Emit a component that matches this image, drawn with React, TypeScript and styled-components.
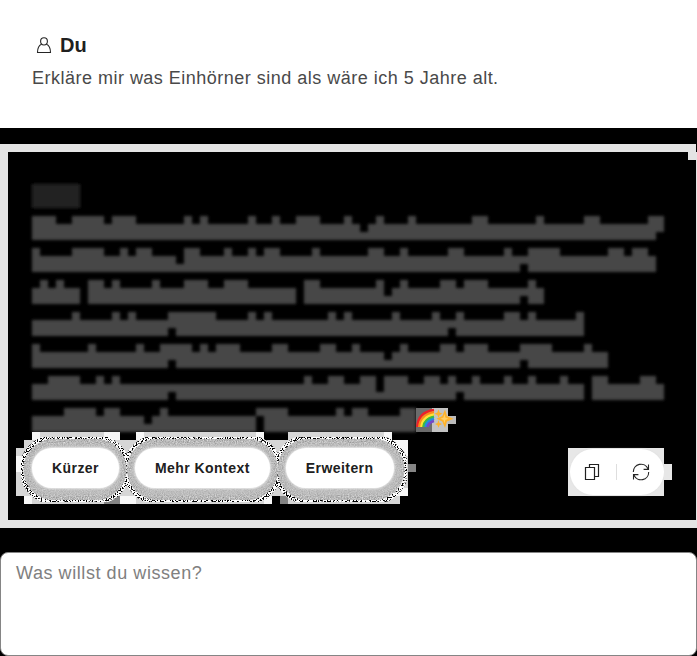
import React from "react";
import styled, { createGlobalStyle } from "styled-components";

const GlobalStyle = createGlobalStyle`
  * { box-sizing: border-box; }
  html, body { margin: 0; padding: 0; background: #000; overflow: hidden; }
  body, button, textarea { font-family: "Liberation Sans", Arial, Helvetica, sans-serif; }
`;

const Page = styled.main`
  width: 697px;
  height: 656px;
  display: flex;
  flex-direction: column;
  background: #000;
  overflow: hidden;
`;

const Prompt = styled.section`
  height: 128px;
  flex: none;
  padding: 32px 32px 0;
  background: #fff;
`;

const Author = styled.h2`
  margin: 0;
  height: 26px;
  display: flex;
  align-items: center;
  gap: 8px;
  padding-left: 4px;
  font-size: 20px;
  font-weight: 700;
  line-height: 26px;
  color: #202020;
  svg { display: block; }
`;

const Question = styled.p`
  margin: 8px 0 0;
  font-size: 18px;
  line-height: 24px;
  letter-spacing: 0.49px;
  color: #494949;
  white-space: nowrap;
`;

const Answer = styled.section`
  position: relative;
  height: 384px;
  flex: none;
  margin-top: 16px;
  padding: 32px 0 0 24px;
  border: solid #e4e4e4;
  border-width: 8px 1px 8px 8px;
`;

const Corner = styled.span`
  position: absolute;
  top: 0;
  right: 0;
  width: 8px;
  height: 8px;
  background: #e4e4e4;
`;

const Outside = styled.span`
  position: absolute;
  top: -8px;
  right: -1px;
  width: 1px;
  height: 8px;
  background: #000;
`;

const HiddenText = styled.svg`
  display: block;
  overflow: visible;
`;

const Footer = styled.div`
  position: relative;
  height: 48px;
  margin-top: 16px;
  display: flex;
  justify-content: space-between;
`;

const Halo = styled.svg`
  position: absolute;
  left: -24px;
  top: -17px;
  pointer-events: none;
`;

const Suggestions = styled.div`
  position: relative;
  display: flex;
  gap: 16px;
  height: 40px;
`;

const Pill = styled.button`
  height: 40px;
  padding: 0 20px;
  border: 0;
  border-radius: 20px;
  background: #fff;
  box-shadow: 0 0 2px 1px #e8e8e8;
  color: #202020;
  font-size: 14px;
  font-weight: 700;
  line-height: 39px;
  letter-spacing: 0.44px;
  white-space: nowrap;
`;

const ToolPatch = styled.div`
  position: relative;
  width: 96px;
  height: 48px;
  margin-right: 32px;
  background: #e7e7e7;
`;

const PatchTail = styled.span`
  position: absolute;
  left: 96px;
  top: 16px;
  width: 8px;
  height: 16px;
  background: #e7e7e7;
`;

const Tools = styled.div`
  width: 94px;
  height: 46px;
  margin: 1px 0 0 1.5px;
  display: flex;
  align-items: center;
  justify-content: center;
  border-radius: 23px;
  background: #fff;
  box-shadow: 0 0 2px #ddd;
`;

const Tool = styled.button`
  display: flex;
  width: 48px;
  height: 40px;
  flex: none;
  padding: 0;
  align-items: center;
  justify-content: center;
  border: 0;
  background: none;
`;

const Divider = styled.span`
  width: 1px;
  height: 16px;
  flex: none;
  background: #dedede;
`;

const Ask = styled.textarea`
  display: block;
  width: 697px;
  height: 104px;
  flex: none;
  margin: 24px 0 0;
  padding: 8px 15px;
  resize: none;
  border: 1px solid #858585;
  border-radius: 8px;
  background: #fff;
  font-size: 18px;
  line-height: 25px;
  letter-spacing: 0.57px;
  outline: none;
  &::placeholder { color: #808080; opacity: 1; }
`;

type Line = { end: number; up: number[]; dip?: number[]; notch?: number[]; gap?: number[]; cap?: number[] };

const CELL = 8;

/* Each line is a run of 8px cells: `up` cells rise one step, `dip` cells lose
   their middle, `notch` cells lose their foot, `cap` cells keep only the top. */
const lines: Line[] = [
  { end: 79, up: [0, 1, 2, 5, 6, 7, 8, 10, 11, 12, 19, 21, 27, 30, 33, 34, 35, 39, 43, 47, 55, 56, 63, 69, 70, 77, 78], dip: [41], notch: [78] },
  { end: 78, up: [0, 5, 6, 7, 8, 11, 13, 14, 19, 20, 24, 27, 29, 30, 35, 42, 43, 46, 52, 53, 59, 62, 63, 64, 65, 72, 73, 75, 76], dip: [18], notch: [61] },
  { end: 64, up: [1, 3, 7, 8, 10, 15, 19, 20, 21, 24, 25, 26, 34, 35, 43, 46, 51, 52, 54, 55, 56, 62], dip: [44], notch: [61], gap: [6, 33] },
  { end: 69, up: [5, 10, 12, 17, 18, 19, 20, 21, 22, 27, 29, 37, 39, 45, 50, 53, 59, 60, 62, 68], notch: [17, 52] },
  { end: 72, up: [0, 7, 13, 16, 17, 18, 19, 21, 23, 24, 25, 30, 31, 36, 37, 40, 46, 51, 52, 54, 55, 56, 61, 62, 63, 64, 69], dip: [44], notch: [17, 61] },
  { end: 79, up: [2, 3, 4, 5, 8, 10, 34, 37, 38, 41, 42, 44, 45, 46, 49, 50, 52, 55, 59, 62, 66, 70, 71, 76, 77], dip: [43], notch: [17, 53], gap: [69] },
  { end: 48, up: [4, 5, 6, 7, 9, 10, 16, 28, 29, 30, 31, 38, 40, 41, 46, 47], dip: [14], cap: [28] },
];

function linePath({ end, up, dip = [], notch = [], gap = [], cap = [] }: Line, y: number) {
  let d = "";
  for (let i = 0; i < end; i++) {
    if (gap.includes(i)) continue;
    const top = up.includes(i) ? 0 : dip.includes(i) ? 16 : 8;
    const bottom = cap.includes(i) ? 8 : notch.includes(i) ? 16 : 24;
    d += `M${i * CELL} ${y + top}h8v${bottom - top}h-8z`;
  }
  return d;
}

const UserIcon = () => (
  <svg width="16" height="18" viewBox="0 0 16 18" fill="none" stroke="#252525" strokeWidth="1.1">
    <path d="M8 1.7c2.1 0 3.4 1.5 3.4 3.6S10 9 8 9 4.6 7.4 4.6 5.3 5.9 1.7 8 1.7Z" />
    <path d="M5.5 8.2C2.8 9.4 1.5 12 1.5 16.5h13c0-4.5-1.3-7.100-4-8.300" />
  </svg>
);

const CopyIcon = () => (
  <svg width="16" height="18" viewBox="0 0 16 18" fill="none" stroke="#202020" strokeWidth="1.2">
    <path d="M5.5 4V1.5h9v12H11M1.5 4.5h9v12h-9z" />
  </svg>
);

const RefreshIcon = () => (
  <svg width="18" height="18" viewBox="0 0 18 18" fill="none" stroke="#252525" strokeWidth="1.1">
    <path d="M1.3 9A7.7 7.7 0 0 1 16 5.7M16.5 1.5v4.900h-4.900M16.700 9A7.700 7.700 0 0 1 2 12.300M1.500 16.500v-4.900h4.900" />
  </svg>
);

const Emoji = () => (
  <g transform="translate(384 224)">
    <path d="M0 0h16v24H0z" fill="#6c6c6c" />
    <path d="M16 0h16v24H16z" fill="#c4c4c4" />
    <path d="M32 8h8v8h-8z" fill="#bbb" />
    <g fill="none" strokeWidth="2.5">
      <path d="M1.2 19C2 9 8 3.2 18 2" stroke="#ee2029" />
      <path d="M3.3 19C4 11 9 6 18 4.3" stroke="#ff8b1b" />
      <path d="M5.4 19C6 12.5 10.5 8 18 6.5" stroke="#ffe236" />
      <path d="M7.4 19C8 14 12 10 18 8.7" stroke="#3ebd3e" />
      <path d="M9.5 19c.5-4 4-7 8.5-8.2" stroke="#238cdf" />
      <path d="M11.4 19c.8-3 3.100-5 6.600-6" stroke="#7446c8" />
    </g>
    <path d="m29 1.5 2 6.5 6.5 2.800-6.500 2.700-2 6.500-2.700-6.500-5.800-2.700 5.800-2.800zM22.500 1.500l1.200 3 2.800 1.200-2.800 1.200-1.200 2.800-1.200-2.800-2.800-1.200 2.800-1.200zM22.500 12l1 3 2.500 1-2.500 1.200-1 2.500-1-2.500-2.500-1.200 2.500-1z" fill="#ffb22b" />
    <path d="m28.500 6 .8 3.500 3 1.200-3 1.300-.8 3.500-1-3.500-3-1.300 3-1.200z" fill="#ffd067" />
  </g>
);

const halos = [
  { x: 21.5, w: 107 },
  { x: 125, w: 155 },
  { x: 275.5, w: 131 },
];

const PillHalo = () => (
  <Halo width="420" height="76" viewBox="8 431 420 76">
    <defs>
      <filter id="grain" x="0" y="0" width="100%" height="100%" colorInterpolationFilters="sRGB">
        <feTurbulence type="fractalNoise" baseFrequency=".85" numOctaves="2" seed="4" />
        <feColorMatrix values=".55 0 0 0 .44  .55 0 0 0 .44  .55 0 0 0 .44  0 0 0 0 1" />
        <feComposite in2="SourceGraphic" operator="in" />
      </filter>
      <filter id="speckle" x="0" y="0" width="100%" height="100%" colorInterpolationFilters="sRGB">
        <feTurbulence type="fractalNoise" baseFrequency=".8" numOctaves="1" seed="9" />
        <feColorMatrix values="20 0 0 0 -8.6  20 0 0 0 -8.6  20 0 0 0 -8.6  0 0 0 0 1" />
        <feComposite in2="SourceGraphic" operator="in" />
      </filter>
      <filter id="soft"><feGaussianBlur stdDeviation="2.5" /></filter>
    </defs>
    <g shapeRendering="crispEdges">
      <path d="M32 432h88v8h-88zM136 432h128v8H136zM288 432h104v8H288zM24 440h376v8H24zM16 448h392v48H16zM24 496h248v8H24zM280 496h120v8H280z" fill="#d6d6d6" />
      <path d="M32 432h8v8h-8zM104 432h16v8h-16zM136 432h8v8h-8zM256 432h8v8h-8zM24 496h8v8h-8zM120 496h16v8h-16zM264 496h8v8h-8zM384 432h8v8h-8zM392 440h16v16h-16zM392 488h16v8h-16zM16 456h8v16h-8z" fill="#f7f7f7" />
      <path d="M104 496h16v8h-16zM280 496h8v8h-8zM408 464h8v8h-8z" fill="#858585" />
    </g>
    <g fill="none" stroke="#fff" strokeWidth="4" filter="url(#speckle)">
      {halos.map(({ x, w }) => <rect key={x} x={x} y="437" width={w} height="65" rx="32.5" />)}
    </g>
    <g fill="#bbb" filter="url(#grain)">
      {halos.map(({ x, w }) => <rect key={x} x={x + 2} y="439" width={w - 4} height="61" rx="30.5" />)}
    </g>
    <g fill="#c2c2c2" opacity=".65" filter="url(#soft)">
      {halos.map(({ x, w }) => <rect key={x} x={x + 5} y="443" width={w - 10} height="53" rx="26.5" />)}
    </g>
  </Halo>
);

export default function App() {
  return (
    <Page>
      <GlobalStyle />
      <Prompt>
        <Author><UserIcon />Du</Author>
        <Question>Erkläre mir was Einhörner sind als wäre ich 5 Jahre alt.</Question>
      </Prompt>
      <Answer>
        <Corner />
        <Outside />
        <HiddenText width="632" height="248" viewBox="0 0 632 248">
          <defs>
            <filter id="edge" x="-1%" y="-2%" width="102%" height="104%"><feGaussianBlur stdDeviation="1.6" /></filter>
          </defs>
          <g filter="url(#edge)">
            <path d="M0 0h48v24H0z" fill="#242424" />
            {lines.map((line, i) => <path key={i} d={linePath(line, 32 + i * 32)} fill="#474747" />)}
          </g>
          <Emoji />
        </HiddenText>
        <Footer>
          <PillHalo />
          <Suggestions>
            <Pill>Kürzer</Pill>
            <Pill>Mehr Kontext</Pill>
            <Pill>Erweitern</Pill>
          </Suggestions>
          <ToolPatch>
            <PatchTail />
            <Tools>
              <Tool aria-label="Kopieren"><CopyIcon /></Tool>
              <Divider />
              <Tool aria-label="Neu laden"><RefreshIcon /></Tool>
            </Tools>
          </ToolPatch>
        </Footer>
      </Answer>
      <Ask placeholder="Was willst du wissen?" />
    </Page>
  );
}
